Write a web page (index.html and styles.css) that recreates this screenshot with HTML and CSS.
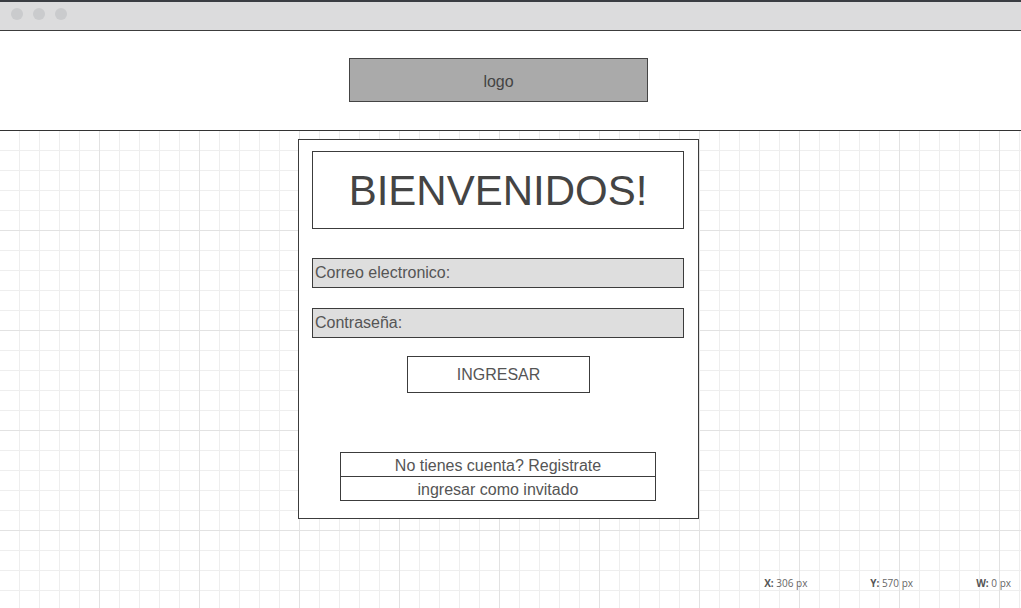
FILE: index.html
```html
<!DOCTYPE html>
<html lang="es">
<head>
<meta charset="utf-8">
<title>Login</title>
<link rel="stylesheet" href="styles.css">
</head>
<body>
<div class="titlebar">
  <span class="dot"></span><span class="dot"></span><span class="dot"></span>
</div>
<header class="header">
  <div class="logo">logo</div>
</header>
<main class="canvas">
  <section class="card">
    <div class="title">BIENVENIDOS!</div>
    <div class="field">Correo electronico:</div>
    <div class="field field-2">Contraseña:</div>
    <div class="btn">INGRESAR</div>
    <div class="links">
      <div class="link">No tienes cuenta? Registrate</div>
      <div class="link link-2">ingresar como invitado</div>
    </div>
  </section>
  <div class="status">
    <span class="stat"><b>X:</b> 306 px</span>
    <span class="stat"><b>Y:</b> 570 px</span>
    <span class="stat"><b>W:</b> 0 px</span>
  </div>
</main>
</body>
</html>
```
FILE: styles.css
```css
* { box-sizing: border-box; }
html, body { margin: 0; padding: 0; }
body {
  width: 1021px;
  height: 608px;
  overflow: hidden;
  background: #fff;
  font-family: "Liberation Sans", Arial, sans-serif;
  color: #444;
}
.titlebar {
  height: 31px;
  background: #dcdcdd;
  border-top: 2px solid #3a3d42;
  border-bottom: 1px solid #3c3c3c;
  display: flex;
  align-items: center;
  gap: 10px;
  padding: 0 0 5px 11px;
}
.dot {
  width: 12px;
  height: 12px;
  border-radius: 50%;
  background: #cacbcd;
}
.header {
  height: 100px;
  border-bottom: 1px solid #333;
  padding: 27px 0 0 349px;
}
.logo {
  width: 299px;
  height: 44px;
  background: #aaa;
  border: 1px solid #444;
  display: flex;
  align-items: center;
  justify-content: center;
  font-size: 16px;
  color: #444;
  padding-top: 3px;
}
.canvas {
  position: relative;
  height: 477px;
  padding: 8px 0 0 298px;
  background-color: #fff;
  background-image:
    linear-gradient(to right, #e2e2e2 1px, transparent 1px),
    linear-gradient(to bottom, #e2e2e2 1px, transparent 1px),
    linear-gradient(to right, #eeeeee 1px, transparent 1px),
    linear-gradient(to bottom, #eeeeee 1px, transparent 1px);
  background-size: 100px 100px, 100px 100px, 20px 20px, 20px 20px;
  background-position: -1px -1px, -1px -1px, -1px -1px, -1px -1px;
}
.card {
  width: 401px;
  height: 380px;
  background: #fff;
  border: 1px solid #3c3c3c;
  padding: 11px 0 0 13px;
  display: flex;
  flex-direction: column;
  align-items: flex-start;
}
.title {
  width: 372px;
  height: 78px;
  border: 1px solid #3c3c3c;
  display: flex;
  align-items: center;
  justify-content: center;
  font-size: 42px;
  color: #444;
  padding-top: 1px;
}
.field {
  width: 372px;
  height: 30px;
  margin-top: 29px;
  background: #dedede;
  border: 1px solid #3c3c3c;
  font-size: 16px;
  color: #555;
  display: flex;
  align-items: center;
  padding-left: 2px;
}
.field-2 { margin-top: 20px; }
.btn {
  width: 183px;
  height: 37px;
  margin: 18px 0 0 95px;
  border: 1px solid #3c3c3c;
  display: flex;
  align-items: center;
  justify-content: center;
  font-size: 16px;
  color: #555;
  padding-top: 1px;
}
.links {
  width: 316px;
  margin: 59px 0 0 28px;
  border: 1px solid #3c3c3c;
}
.link {
  height: 23px;
  display: flex;
  align-items: center;
  justify-content: center;
  font-size: 16px;
  color: #555;
  padding-top: 2px;
}
.link-2 {
  border-top: 1px solid #3c3c3c;
  height: 24px;
}
.status {
  position: absolute;
  right: 10px;
  bottom: 18px;
  display: flex;
  font-family: "Open Sans", sans-serif;
  font-size: 10px;
  color: #666;
}
.stat { width: 106px; }
.stat:last-child { width: auto; }
.stat b { color: #555; font-weight: 700; }
```
